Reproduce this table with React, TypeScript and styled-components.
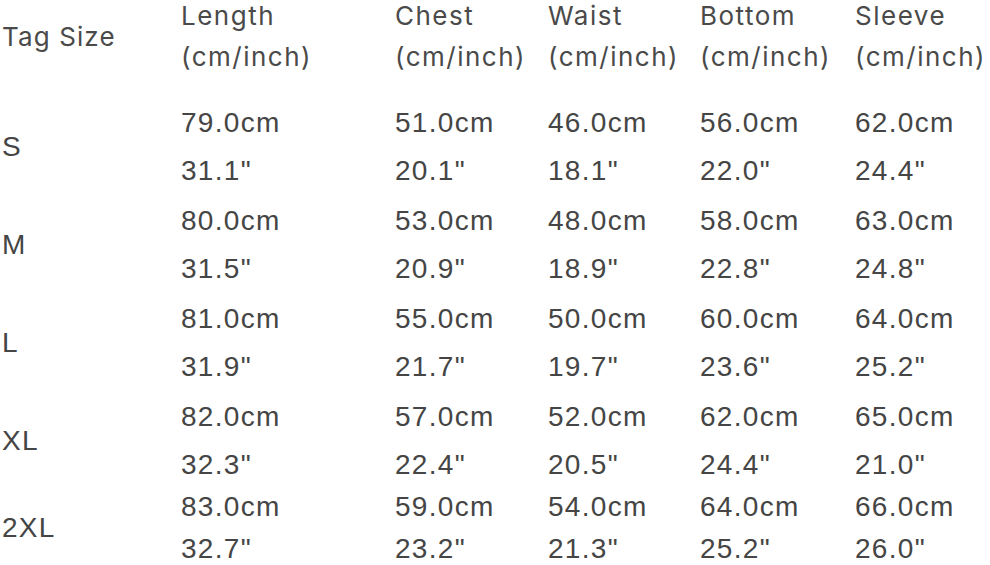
import styled, { createGlobalStyle } from "styled-components";

type Measure = { cm: string; inch: string };
type SizeRow = {
  tag: string;
  values: Measure[];
};

const columns = ["Length", "Chest", "Waist", "Bottom", "Sleeve"];

const rows: SizeRow[] = [
  {
    tag: "S",
    values: [
      { cm: "79.0cm", inch: '31.1"' },
      { cm: "51.0cm", inch: '20.1"' },
      { cm: "46.0cm", inch: '18.1"' },
      { cm: "56.0cm", inch: '22.0"' },
      { cm: "62.0cm", inch: '24.4"' },
    ],
  },
  {
    tag: "M",
    values: [
      { cm: "80.0cm", inch: '31.5"' },
      { cm: "53.0cm", inch: '20.9"' },
      { cm: "48.0cm", inch: '18.9"' },
      { cm: "58.0cm", inch: '22.8"' },
      { cm: "63.0cm", inch: '24.8"' },
    ],
  },
  {
    tag: "L",
    values: [
      { cm: "81.0cm", inch: '31.9"' },
      { cm: "55.0cm", inch: '21.7"' },
      { cm: "50.0cm", inch: '19.7"' },
      { cm: "60.0cm", inch: '23.6"' },
      { cm: "64.0cm", inch: '25.2"' },
    ],
  },
  {
    tag: "XL",
    values: [
      { cm: "82.0cm", inch: '32.3"' },
      { cm: "57.0cm", inch: '22.4"' },
      { cm: "52.0cm", inch: '20.5"' },
      { cm: "62.0cm", inch: '24.4"' },
      { cm: "65.0cm", inch: '21.0"' },
    ],
  },
  {
    tag: "2XL",
    values: [
      { cm: "83.0cm", inch: '32.7"' },
      { cm: "59.0cm", inch: '23.2"' },
      { cm: "54.0cm", inch: '21.3"' },
      { cm: "64.0cm", inch: '25.2"' },
      { cm: "66.0cm", inch: '26.0"' },
    ],
  },
];

export default function App() {
  return (
    <>
      <GlobalStyle />
      <Table>
        <HeaderRow>
          <TagHeader>Tag Size</TagHeader>
          {columns.map((name) => (
            <HeaderCell key={name}>
              <HeaderLine>{name}</HeaderLine>
              <HeaderLine>(cm/inch)</HeaderLine>
            </HeaderCell>
          ))}
        </HeaderRow>
        {rows.map((row, i) => (
          <BodyRow key={row.tag} $compact={i === rows.length - 1}>
            <TagCell>{row.tag}</TagCell>
            {row.values.map((v, j) => (
              <ValueCell key={j} $compact={i === rows.length - 1}>
                <ValueLine>{v.cm}</ValueLine>
                <ValueLine>{v.inch}</ValueLine>
              </ValueCell>
            ))}
          </BodyRow>
        ))}
      </Table>
    </>
  );
}

const GlobalStyle = createGlobalStyle`
  html, body {
    margin: 0;
    padding: 0;
    background: #ffffff;
  }
  body {
    width: 990px;
    height: 565px;
    overflow: hidden;
    color: #444444;
  }
`;

const Table = styled.div`
  padding-left: 2px;
  display: flex;
  flex-direction: column;
`;

const gridColumns = "179px 214px 153px 152px 155px 1fr";

// header
const HeaderRow = styled.div`
  display: grid;
  grid-template-columns: ${gridColumns};
  align-items: center;
  font-family: Inter, "Noto Sans", sans-serif;
  font-size: 26px;
  letter-spacing: 1.5px;
  color: #4a4a4a;
`;
const TagHeader = styled.div`
  line-height: 32px;
  letter-spacing: 1.1px;
`;
const HeaderCell = styled.div`
  display: flex;
  flex-direction: column;
  gap: 9px;
`;
const HeaderLine = styled.span`
  line-height: 32px;
  white-space: nowrap;
`;

// body
const BodyRow = styled.div<{ $compact: boolean }>`
  display: grid;
  grid-template-columns: ${gridColumns};
  align-items: center;
  margin-top: ${({ $compact }) => ($compact ? "12px" : "20px")};
  font-family: "Liberation Sans", Arial, sans-serif;
  font-size: 28px;
  letter-spacing: 1.3px;
  color: #454545;

  &:nth-child(2) {
    margin-top: 35px;
  }
`;
const TagCell = styled.div`
  line-height: 30px;
`;
const ValueCell = styled.div<{ $compact: boolean }>`
  display: flex;
  flex-direction: column;
  gap: ${({ $compact }) => ($compact ? "12px" : "18px")};
`;
const ValueLine = styled.span`
  line-height: 30px;
  white-space: nowrap;
`;
